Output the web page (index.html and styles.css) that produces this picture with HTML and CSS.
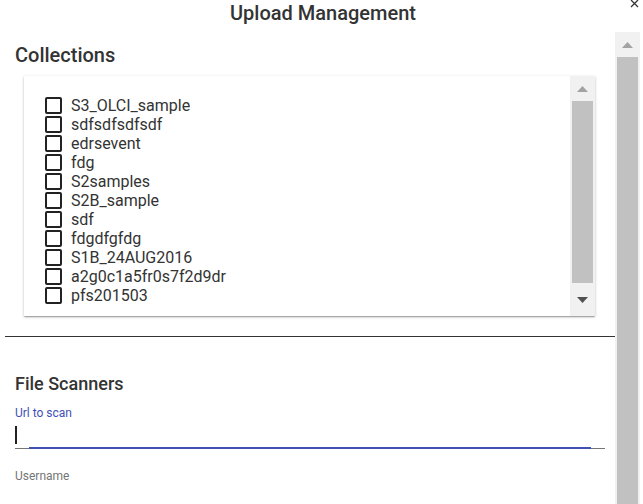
FILE: index.html
```html
<!DOCTYPE html>
<html lang="en">
<head>
<meta charset="utf-8">
<title>Upload Management</title>
<link rel="stylesheet" href="styles.css">
</head>
<body>
<div class="dialog">
  <div class="title">Upload Management</div>
  <button class="close" aria-label="Close">
    <svg width="9" height="9" viewBox="0 0 9 9"><path d="M1 1L8 8M8 1L1 8" stroke="#333" stroke-width="1.3" fill="none"/></svg>
  </button>
  <div class="main">
    <div class="content">
      <h2 class="heading">Collections</h2>
      <div class="card">
        <div class="list">
          <label class="row"><span class="box"></span>S3_OLCI_sample</label>
          <label class="row"><span class="box"></span>sdfsdfsdfsdf</label>
          <label class="row"><span class="box"></span>edrsevent</label>
          <label class="row"><span class="box"></span>fdg</label>
          <label class="row"><span class="box"></span>S2samples</label>
          <label class="row"><span class="box"></span>S2B_sample</label>
          <label class="row"><span class="box"></span>sdf</label>
          <label class="row"><span class="box"></span>fdgdfgfdg</label>
          <label class="row"><span class="box"></span>S1B_24AUG2016</label>
          <label class="row"><span class="box"></span>a2g0c1a5fr0s7f2d9dr</label>
          <label class="row"><span class="box"></span>pfs201503</label>
        </div>
        <div class="sbar inner">
          <div class="sbtn"><svg width="11" height="6" viewBox="0 0 11 6"><polygon points="5.5,0 11,6 0,6" fill="#a3a3a3"/></svg></div>
          <div class="thumb inner-thumb"></div>
          <div class="sbtn down"><svg width="11" height="6" viewBox="0 0 11 6"><polygon points="0,0 11,0 5.5,6" fill="#505050"/></svg></div>
        </div>
      </div>
      <div class="divider"></div>
      <h3 class="subheading">File Scanners</h3>
      <div class="label focused">Url to scan</div>
      <div class="field">
        <span class="caret"></span>
        <span class="ink"></span>
      </div>
      <div class="label">Username</div>
    </div>
    <div class="sbar outer">
      <div class="sbtn"><svg width="11" height="6" viewBox="0 0 11 6"><polygon points="5.5,0 11,6 0,6" fill="#a3a3a3"/></svg></div>
      <div class="thumb outer-thumb"></div>
    </div>
  </div>
</div>
</body>
</html>
```

FILE: styles.css
```css
* { box-sizing: border-box; }
html, body {
  margin: 0;
  padding: 0;
  background: #fff;
}
body {
  width: 643px;
  height: 504px;
  overflow: hidden;
  font-family: Roboto, "Liberation Sans", sans-serif;
  color: #333;
}
.dialog {
  position: relative;
  height: 504px;
  display: flex;
  flex-direction: column;
}
.title {
  height: 32px;
  padding-top: 1px;
  line-height: 24px;
  font-size: 20px;
  font-weight: 500;
  text-align: center;
  padding-left: 3px;
  color: #333;
}
.close {
  position: absolute;
  top: -1px;
  right: 4px;
  width: 9px;
  height: 9px;
  padding: 0;
  border: 0;
  background: none;
  display: block;
}
.close svg { display: block; }
.main {
  display: flex;
  flex: 1;
  min-height: 0;
  padding-right: 3px;
}
.content {
  flex: 0 0 615px;
  width: 615px;
  overflow: hidden;
}
.heading {
  margin: 11px 0 0 15px;
  font-size: 20px;
  line-height: 24px;
  font-weight: 500;
}
.card {
  margin: 9px 0 0 24px;
  width: 571px;
  height: 240px;
  display: flex;
  background: #fff;
  box-shadow: 0 1px 3px 0 rgba(0,0,0,.2), 0 1px 1px 0 rgba(0,0,0,.14), 0 2px 1px -1px rgba(0,0,0,.12);
}
.list {
  flex: 1;
  padding: 20px 0 0 21px;
}
.row {
  display: flex;
  align-items: center;
  gap: 9px;
  height: 19px;
  line-height: 19px;
  font-size: 16px;
  color: #333;
}
.box {
  width: 17px;
  height: 17px;
  border: 2px solid #222;
  border-radius: 2px;
  flex: 0 0 17px;
}
.sbar {
  width: 25px;
  flex: 0 0 25px;
  background: #f1f1f1;
  display: flex;
  flex-direction: column;
  align-items: center;
}
.sbtn {
  height: 25px;
  flex: 0 0 25px;
  width: 100%;
  display: flex;
  align-items: center;
  justify-content: center;
}
.sbtn svg { display: block; }
.sbtn.down {
  flex: 1;
}
.thumb {
  width: 21px;
  background: #c1c1c1;
}
.inner-thumb {
  height: 182px;
  flex: 0 0 182px;
}
.outer-thumb {
  flex: 1;
}
.divider {
  margin: 20px 0 0 5px;
  width: 610px;
  height: 1px;
  background: #333;
}
.subheading {
  margin: 36px 0 0 15px;
  font-size: 18px;
  line-height: 22px;
  font-weight: 500;
}
.label {
  margin: 11px 0 0 15px;
  font-size: 12px;
  line-height: 14px;
  color: #757575;
}
.label.focused {
  color: #3f51b5;
}
.field {
  position: relative;
  margin-left: 15px;
  width: 590px;
  height: 29px;
  padding-top: 6px;
  border-bottom: 1px solid #757575;
  margin-bottom: 20px;
}
.caret {
  display: block;
  width: 2px;
  height: 18px;
  background: #222;
}
.ink {
  position: absolute;
  left: 14px;
  bottom: -1px;
  width: 562px;
  height: 2px;
  background: #3f51b5;
}
```
